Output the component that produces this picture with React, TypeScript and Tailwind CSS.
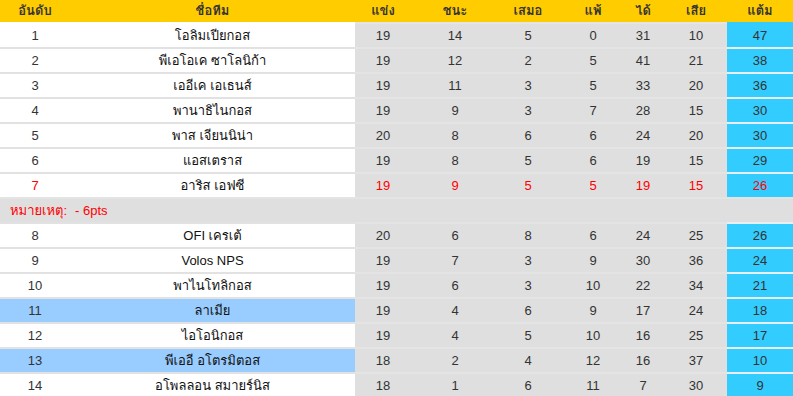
import React from "react";

type Row = {
  rank: number;
  name: string;
  p: number;
  w: number;
  d: number;
  l: number;
  gf: number;
  ga: number;
  pts: number;
  red?: boolean;
  hl?: boolean;
};

const rows: Row[] = [
  { rank: 1, name: "โอลิมเปียกอส", p: 19, w: 14, d: 5, l: 0, gf: 31, ga: 10, pts: 47 },
  { rank: 2, name: "พีเอโอเค ซาโลนิก้า", p: 19, w: 12, d: 2, l: 5, gf: 41, ga: 21, pts: 38 },
  { rank: 3, name: "เออีเค เอเธนส์", p: 19, w: 11, d: 3, l: 5, gf: 33, ga: 20, pts: 36 },
  { rank: 4, name: "พานาธิไนกอส", p: 19, w: 9, d: 3, l: 7, gf: 28, ga: 15, pts: 30 },
  { rank: 5, name: "พาส เจียนนิน่า", p: 20, w: 8, d: 6, l: 6, gf: 24, ga: 20, pts: 30 },
  { rank: 6, name: "แอสเตราส", p: 19, w: 8, d: 5, l: 6, gf: 19, ga: 15, pts: 29 },
  { rank: 7, name: "อาริส เอฟซี", p: 19, w: 9, d: 5, l: 5, gf: 19, ga: 15, pts: 26, red: true },
];

const rows2: Row[] = [
  { rank: 8, name: "OFI เครเต้", p: 20, w: 6, d: 8, l: 6, gf: 24, ga: 25, pts: 26 },
  { rank: 9, name: "Volos NPS", p: 19, w: 7, d: 3, l: 9, gf: 30, ga: 36, pts: 24 },
  { rank: 10, name: "พาไนโทลิกอส", p: 19, w: 6, d: 3, l: 10, gf: 22, ga: 34, pts: 21 },
  { rank: 11, name: "ลาเมีย", p: 19, w: 4, d: 6, l: 9, gf: 17, ga: 24, pts: 18, hl: true },
  { rank: 12, name: "ไอโอนิกอส", p: 19, w: 4, d: 5, l: 10, gf: 16, ga: 25, pts: 17 },
  { rank: 13, name: "พีเออี อโตรมิตอส", p: 18, w: 2, d: 4, l: 12, gf: 16, ga: 37, pts: 10, hl: true },
  { rank: 14, name: "อโพลลอน สมายร์นิส", p: 18, w: 1, d: 6, l: 11, gf: 7, ga: 30, pts: 9 },
];

function TableRow({ r, first }: { r: Row; first?: boolean }) {
  const num = r.red ? "text-[#ff0000]" : "text-[#333333]";
  const left = r.hl ? "bg-[#99ccff]" : "bg-white";
  const leftBorder = first ? (r.hl ? "border-[#99ccff]" : "border-white") : "border-[#e2e2e2]";
  const blueBorder = first ? "border-[#33ccff]" : "border-[#e8eef2]";
  return (
    <div className="flex h-[25px] text-[13px]">
      <div className={`w-[70px] ${left} border-t-2 ${leftBorder} flex items-center justify-center ${num}`}>
        {r.rank}
      </div>
      <div className={`w-[285px] ${left} border-t-2 ${leftBorder} flex items-center justify-center text-[#111111]`}>
        {r.name}
      </div>
      <div className={`w-[372px] bg-[#dfdfdf] border-t-2 border-[#e4e4e4] flex ${num}`}>
        <div className="w-[56px] flex items-center justify-center">{r.p}</div>
        <div className="w-[88px] flex items-center justify-center">{r.w}</div>
        <div className="w-[58px] flex items-center justify-center">{r.d}</div>
        <div className="w-[72px] flex items-center justify-center">{r.l}</div>
        <div className="w-[36px] flex items-center justify-center pr-[8px]">{r.gf}</div>
        <div className="w-[62px] flex items-center justify-center">{r.ga}</div>
      </div>
      <div className={`w-[66px] bg-[#33ccff] border-t-2 ${blueBorder} flex items-center justify-center ${num}`}>
        {r.pts}
      </div>
    </div>
  );
}

export default function App() {
  return (
    <div className="w-[793px] h-[396px] overflow-hidden bg-white font-['Liberation_Sans',Loma,sans-serif]">
      <div className="flex h-[22px] bg-[#ffcc00] text-[13px] font-bold text-[#333333]">
        <div className="w-[70px] flex items-center justify-center">อันดับ</div>
        <div className="w-[285px] flex items-center justify-center">ชื่อทีม</div>
        <div className="w-[56px] flex items-center justify-center">แข่ง</div>
        <div className="w-[88px] flex items-center justify-center">ชนะ</div>
        <div className="w-[58px] flex items-center justify-center">เสมอ</div>
        <div className="w-[72px] flex items-center justify-center">แพ้</div>
        <div className="w-[36px] flex items-center justify-center pr-[8px]">ได้</div>
        <div className="w-[62px] flex items-center justify-center">เสีย</div>
        <div className="w-[66px] flex items-center justify-center">แต้ม</div>
      </div>
      {rows.map((r, i) => (
        <TableRow key={r.rank} r={r} first={i === 0} />
      ))}
      <div className="flex h-[25px] bg-[#dfdfdf] border-t-2 border-[#e4e4e4] items-center text-[13px] text-[#ff0000]">
        <span className="pl-[10px] w-[75px] shrink-0">หมายเหตุ:</span>
        <span>- 6pts</span>
      </div>
      {rows2.map((r) => (
        <TableRow key={r.rank} r={r} />
      ))}
    </div>
  );
}
